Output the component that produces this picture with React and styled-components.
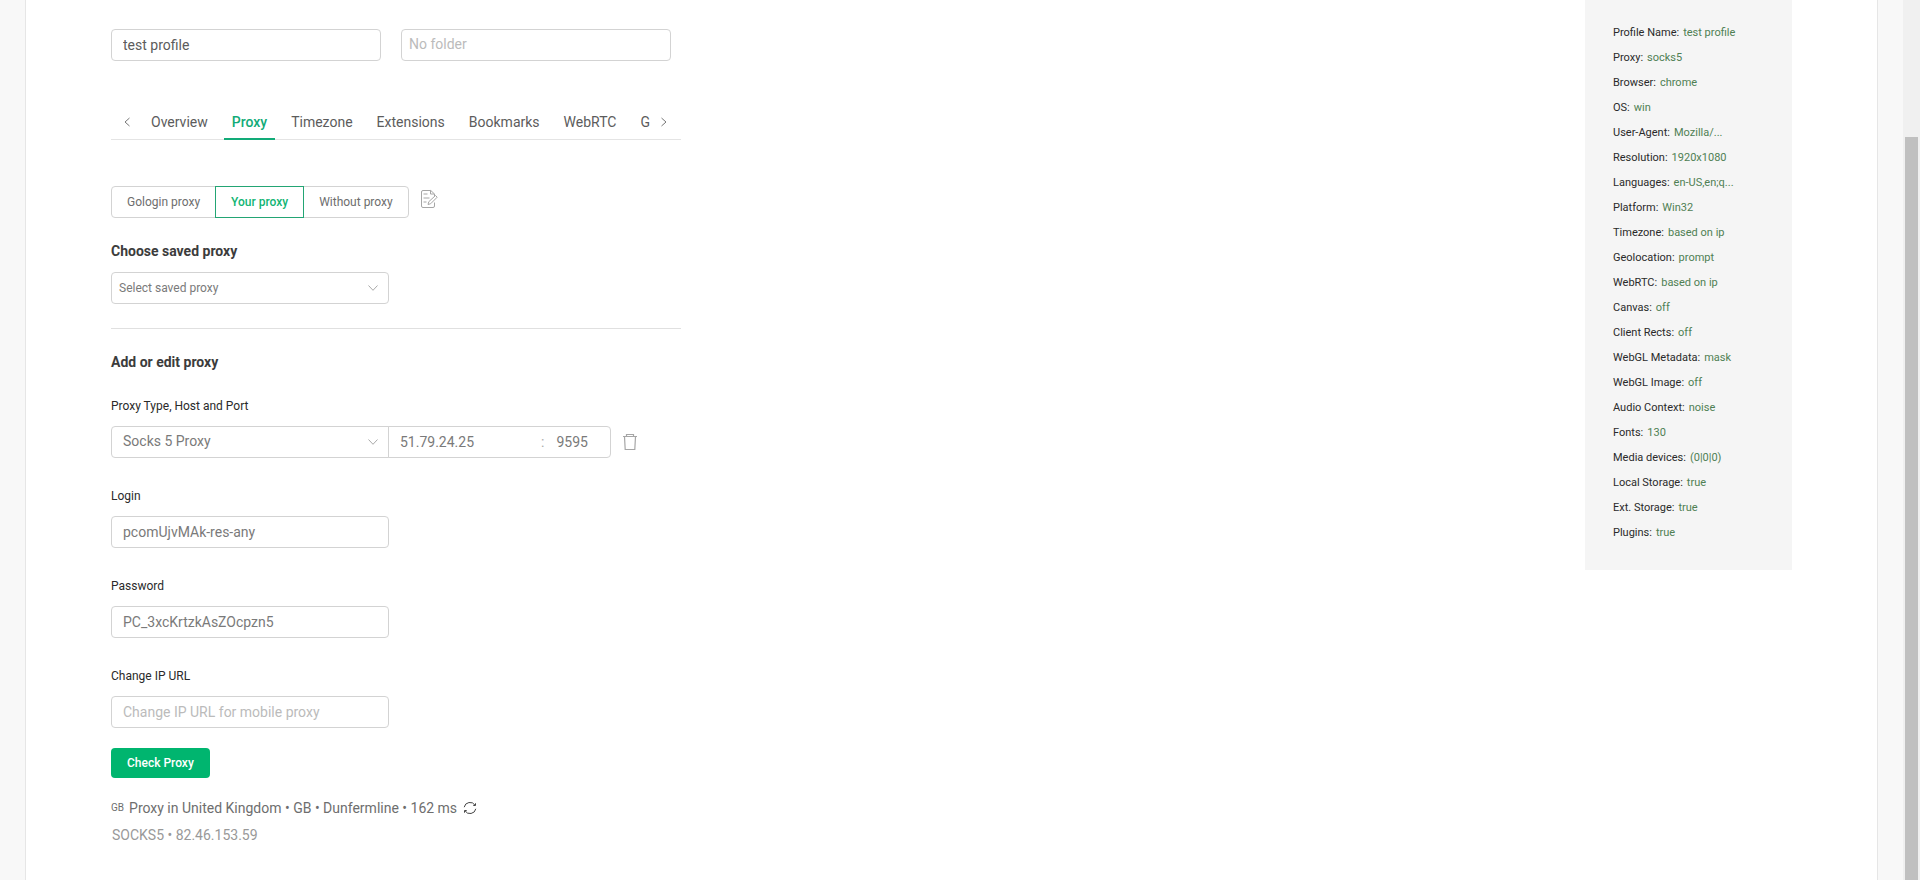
import React from 'react'
import styled, { createGlobalStyle } from 'styled-components'

const GlobalStyle = createGlobalStyle`
  * {
    box-sizing: border-box;
  }

  body {
    margin: 0;
    background-color: #f8f8f8;
    color: #2a2a2a;
    font-family: Roboto, sans-serif;
    font-size: 14px;
    line-height: 22px;
  }

  button, input, select {
    font: inherit;
    color: inherit;
  }
`

const Page = styled.div`
  display: flex;
  height: 100vh;
  overflow: hidden;
`

const Panel = styled.main`
  flex: 1;
  display: flex;
  justify-content: space-between;
  align-items: flex-start;
  margin: 0 25px;
  padding: 0 85px;
  background-color: #fff;
  border: 1px solid #e6e6e6;
  border-width: 0 1px;
`

const ScrollTrack = styled.div`
  width: 17px;
  padding: 137px 2px 0;
  background-color: #f0f0f0;
`

const ScrollThumb = styled.div`
  height: 100%;
  background-color: #c0c0c0;
`

const Form = styled.form`
  width: 570px;
  padding-top: 29px;
`

const TopFields = styled.div`
  display: grid;
  grid-template-columns: 270px 270px;
  gap: 20px;
`

const Input = styled.input`
  width: 100%;
  height: 32px;
  padding: 0 11px;
  color: ${({ dark }) => dark ? '#5c5c5c' : '#7a7a7a'};
  background-color: #fff;
  border: 1px solid #d3d3d3;
  border-radius: 4px;
  outline: none;

  &::placeholder {
    color: #bbb;
    opacity: 1;
  }
`

const FolderInput = styled(Input)`
  padding: 0 7px 2px;
`

const TabBar = styled.div`
  display: flex;
  height: 40px;
  margin-top: 39px;
  border-bottom: 1px solid #e4e4e4;
`

const TabArrow = styled.button`
  flex-shrink: 0;
  display: flex;
  align-items: center;
  justify-content: center;
  width: ${({ next }) => next ? '30px' : '32px'};
  height: 44px;
  padding: ${({ next }) => next ? '0 4px 0 0' : 0};
  color: #777;
  background: none;
  border: 0;
`

const TabList = styled.div`
  flex: 1;
  display: flex;
  gap: 8px;
  min-width: 0;
`

const Tab = styled.button`
  flex-shrink: 0;
  height: 40px;
  padding: 6px 8px 0;
  color: ${({ active }) => active ? '#12ab78' : '#5c5c5c'};
  font-weight: ${({ active }) => active ? 500 : 400};
  background: none;
  border: 0;
  border-bottom: 2px solid ${({ active }) => active ? '#12ab78' : 'transparent'};
`

const ModeRow = styled.div`
  display: flex;
  margin-top: 46px;
`

const Mode = styled.button`
  height: 32px;
  margin-left: -1px;
  padding: 0 15px;
  color: ${({ active }) => active ? '#12b574' : '#6e6e6e'};
  font-size: 12px;
  font-weight: ${({ active }) => active ? 500 : 400};
  background-color: #fff;
  border: 1px solid ${({ active }) => active ? '#23a574' : '#d3d3d3'};
  position: relative;
  z-index: ${({ active }) => active ? 1 : 0};

  &:first-child {
    margin-left: 0;
    border-radius: 4px 0 0 4px;
  }

  &:nth-child(3) {
    border-radius: 0 4px 4px 0;
  }
`

const IconButton = styled.button`
  display: flex;
  align-items: center;
  padding: 0;
  color: ${({ dark }) => dark ? '#444' : '#a6a6a6'};
  background: none;
  border: 0;
`

const NoteButton = styled(IconButton)`
  height: 26px;
  margin-left: 11px;
`

const Heading = styled.h2`
  margin: 0;
  color: #3c3c3c;
  font-size: 14px;
  font-weight: 700;
  line-height: 22px;
`

const SavedSection = styled.section`
  display: grid;
  gap: 10px;
  padding: 22px 0 24px;
  border-bottom: 1px solid #e0e0e0;
`

const SelectBox = styled.div`
  display: grid;
  grid-template-columns: 1fr 32px;
  align-items: center;
  width: 278px;
`

const Select = styled.select`
  grid-area: 1 / 1 / 2 / 3;
  appearance: none;
  width: 100%;
  height: 32px;
  padding: ${({ small }) => small ? '0 7px' : '0 11px 2px'};
  color: #7a7a7a;
  font-size: ${({ small }) => small ? '12px' : '14px'};
  background-color: #fff;
  border: 1px solid #d3d3d3;
  border-radius: ${({ joined }) => joined ? '4px 0 0 4px' : '4px'};
  outline: none;
`

const SelectArrow = styled.svg`
  grid-area: 1 / 2;
  z-index: 1;
  margin-left: 10px;
  pointer-events: none;
`

const EditSection = styled.section`
  padding-top: 22px;
`

const Field = styled.div`
  width: 278px;
  margin-top: 28px;
`

const Label = styled.label`
  display: block;
  margin-bottom: 9px;
  font-size: 12px;
  line-height: 21px;
`

const AddressField = styled(Field)`
  width: 100%;
  margin-top: 23px;
`

const AddressRow = styled.div`
  display: flex;
  align-items: center;
`

const AddressBox = styled.div`
  display: flex;
  align-items: center;
  width: 223px;
  height: 32px;
  margin-left: -1px;
  color: #aaa;
  border: 1px solid #d3d3d3;
  border-radius: 0 4px 4px 0;
`

const PlainInput = styled.input`
  width: ${({ port }) => port ? '60px' : '152px'};
  padding: ${({ port }) => port ? '0 12px' : '0 11px'};
  color: #7a7a7a;
  background: none;
  border: 0;
  outline: none;
`

const TrashButton = styled(IconButton)`
  margin-left: 11px;
`

const CheckButton = styled.button`
  display: block;
  height: 30px;
  margin-top: 20px;
  padding: 0 16px;
  color: #fff;
  font-size: 12px;
  font-weight: 500;
  background-color: #00b56f;
  border: 0;
  border-radius: 4px;
`

const Result = styled.div`
  display: flex;
  align-items: center;
  margin-top: 19px;
  color: #6e6e6e;
`

const Country = styled.span`
  margin-right: 5px;
  font-size: 10px;
`

const RefreshButton = styled(IconButton)`
  margin-left: 6px;
`

const Address = styled.div`
  margin-top: 5px;
  padding-left: 1px;
  color: #999;
`

const Summary = styled.aside`
  width: 207px;
  padding: 20px 28px 25px;
  background-color: #f5f5f5;
`

const SummaryRow = styled.p`
  margin: 0;
  font-size: 11px;
  line-height: 25px;
  white-space: nowrap;
`

const Value = styled.span`
  margin-left: 4px;
  color: #4f8053;
`

const tabs = ['Overview', 'Proxy', 'Timezone', 'Extensions', 'Bookmarks', 'WebRTC', 'G']
const modes = ['Gologin proxy', 'Your proxy', 'Without proxy']

const summary = [
  ['Profile Name', 'test profile'],
  ['Proxy', 'socks5'],
  ['Browser', 'chrome'],
  ['OS', 'win'],
  ['User-Agent', 'Mozilla/...'],
  ['Resolution', '1920x1080'],
  ['Languages', 'en-US,en;q...'],
  ['Platform', 'Win32'],
  ['Timezone', 'based on ip'],
  ['Geolocation', 'prompt'],
  ['WebRTC', 'based on ip'],
  ['Canvas', 'off'],
  ['Client Rects', 'off'],
  ['WebGL Metadata', 'mask'],
  ['WebGL Image', 'off'],
  ['Audio Context', 'noise'],
  ['Fonts', '130'],
  ['Media devices', '(0|0|0)'],
  ['Local Storage', 'true'],
  ['Ext. Storage', 'true'],
  ['Plugins', 'true'],
]

const Chevron = ({ d }) => (
  <svg width="8" height="10" viewBox="0 0 8 10" fill="none" stroke="currentColor">
    <path d={d} />
  </svg>
)

const DownArrow = () => (
  <SelectArrow width="12" height="8" viewBox="0 0 12 8" fill="none" stroke="#aaa">
    <path d="M1.5 1.5 6 6.3l4.5-4.8" />
  </SelectArrow>
)

const NoteIcon = () => (
  <svg width="18" height="20" viewBox="0 0 18 20" fill="none" stroke="currentColor" strokeLinejoin="round">
    <path d="M14.5 7V5L10.8 1.5H3A1.5 1.5 0 0 0 1.5 3v14A1.5 1.5 0 0 0 3 18.5h10a1.5 1.5 0 0 0 1.5-1.5v-3.5" />
    <path d="M10.5 1.5V5h4M3.5 5h4M3.5 9h6M3.5 13h3" />
    <path d="m8 15.5.8-2.8 6.7-6.2 1.7 1.7-6.5 6.5z" />
  </svg>
)

const TrashIcon = () => (
  <svg width="16" height="18" viewBox="0 0 16 18" fill="none" stroke="currentColor" strokeWidth="1.2">
    <path d="M1 3.5h14M4.500 3.500v-2h7v2M2.500 3.500l.7 13h9.600l.7-13" />
  </svg>
)

const RefreshIcon = () => (
  <svg width="14" height="14" viewBox="0 0 14 14" fill="none" stroke="currentColor">
    <path d="M1.200 6.200A5.900 5.900 0 0 1 12 4.200M12.800 7.800A5.900 5.900 0 0 1 2 9.800" />
    <path d="M10.300 4.500h2.200V2.300M3.700 9.500H1.500v2.200" />
  </svg>
)

function TextField({ id, label, ...rest }) {
  return (
    <Field>
      <Label htmlFor={id}>{label}</Label>
      <Input id={id} {...rest} />
    </Field>
  )
}

function ProxyForm() {
  return (
    <Form onSubmit={e => e.preventDefault()}>
      <TopFields>
        <Input aria-label="Profile name" defaultValue="test profile" dark="true" />
        <FolderInput aria-label="Folder" placeholder="No folder" />
      </TopFields>
      <TabBar>
        <TabArrow type="button" aria-label="Previous tabs"><Chevron d="M6.5 1 2 5l4.5 4" /></TabArrow>
        <TabList role="tablist">
          {tabs.map(tab => (
            <Tab key={tab} type="button" role="tab" aria-selected={tab === 'Proxy'} active={tab === 'Proxy' ? 'true' : undefined}>
              {tab}
            </Tab>
          ))}
        </TabList>
        <TabArrow type="button" aria-label="Next tabs" next="true"><Chevron d="M1.5 1 6 5 1.5 9" /></TabArrow>
      </TabBar>
      <ModeRow>
        {modes.map(mode => (
          <Mode key={mode} type="button" active={mode === 'Your proxy' ? 'true' : undefined}>{mode}</Mode>
        ))}
        <NoteButton type="button" aria-label="Paste proxy"><NoteIcon /></NoteButton>
      </ModeRow>
      <SavedSection>
        <Heading as="label" htmlFor="saved">Choose saved proxy</Heading>
        <SelectBox>
          <Select id="saved" small="true">
            <option>Select saved proxy</option>
          </Select>
          <DownArrow />
        </SelectBox>
      </SavedSection>
      <EditSection>
        <Heading>Add or edit proxy</Heading>
        <AddressField>
          <Label htmlFor="type">Proxy Type, Host and Port</Label>
          <AddressRow>
            <SelectBox>
              <Select id="type" joined="true">
                <option>Socks 5 Proxy</option>
              </Select>
              <DownArrow />
            </SelectBox>
            <AddressBox>
              <PlainInput aria-label="Host" defaultValue="51.79.24.25" />
              :
              <PlainInput aria-label="Port" defaultValue="9595" port="true" />
            </AddressBox>
            <TrashButton type="button" aria-label="Clear proxy"><TrashIcon /></TrashButton>
          </AddressRow>
        </AddressField>
        <TextField id="login" label="Login" defaultValue="pcomUjvMAk-res-any" />
        <TextField id="password" label="Password" defaultValue="PC_3xcKrtzkAsZOcpzn5" />
        <TextField id="change-ip" label="Change IP URL" placeholder="Change IP URL for mobile proxy" />
        <CheckButton>Check Proxy</CheckButton>
        <Result>
          <Country>GB</Country>
          Proxy in United Kingdom • GB • Dunfermline • 162 ms
          <RefreshButton type="button" aria-label="Check again" dark="true"><RefreshIcon /></RefreshButton>
        </Result>
        <Address>SOCKS5 • 82.46.153.59</Address>
      </EditSection>
    </Form>
  )
}

function App() {
  return (
    <Page>
      <GlobalStyle />
      <Panel>
        <ProxyForm />
        <Summary>
          {summary.map(([name, value]) => (
            <SummaryRow key={name}>{name}:<Value>{value}</Value></SummaryRow>
          ))}
        </Summary>
      </Panel>
      <ScrollTrack>
        <ScrollThumb />
      </ScrollTrack>
    </Page>
  )
}

export default App
